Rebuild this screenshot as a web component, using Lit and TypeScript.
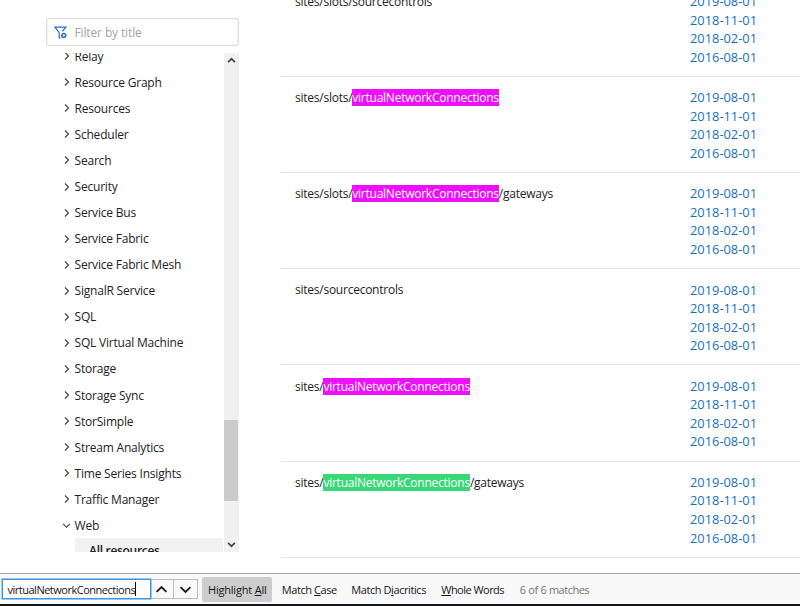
import { LitElement, html, css, svg, nothing } from "lit";
import { customElement } from "lit/decorators.js";

const TERM = "virtualNetworkConnections";
const VERSIONS = ["2019-08-01", "2018-11-01", "2018-02-01", "2016-08-01"];

interface Resource {
  before: string;
  hit?: "match" | "current";
  after?: string;
}

const RESOURCES: Resource[] = [
  { before: "sites/slots/sourcecontrols" },
  { before: "sites/slots/", hit: "match" },
  { before: "sites/slots/", hit: "match", after: "/gateways" },
  { before: "sites/sourcecontrols" },
  { before: "sites/", hit: "match" },
  { before: "sites/", hit: "current", after: "/gateways" },
];

const SERVICES = [
  "Relay", "Resource Graph", "Resources", "Scheduler", "Search", "Security",
  "Service Bus", "Service Fabric", "Service Fabric Mesh", "SignalR Service",
  "SQL", "SQL Virtual Machine", "Storage", "Storage Sync", "StorSimple",
  "Stream Analytics", "Time Series Insights", "Traffic Manager",
];

const chevron = (dir: "right" | "down" | "up", cls: string) => {
  const d = { right: "M3 1.5 6.5 5 3 8.5", down: "M1.2 3.1 5 6.9 8.8 3.1", up: "M1.2 6.9 5 3.1 8.8 6.9" }[dir];
  return html`<svg class=${cls} viewBox="0 0 10 10">${svg`<path d=${d} />`}</svg>`;
};

@customElement("doc-tree")
class DocTree extends LitElement {
  static styles = css`
    :host { display: block; width: 193px; margin: 18px 0 0 46px; flex: none; }
    .filter {
      box-sizing: border-box; height: 28px; border: 1px solid #dedede; border-radius: 2px;
      box-shadow: inset 0 0 0 1px #f3f3f3; letter-spacing: -.13px;
      display: flex; align-items: center; padding-left: 7px; color: #a3a3a3; font-size: 12px;
    }
    .funnel { width: 13px; height: 13px; margin-right: 7.5px; fill: none; stroke: #2b71c4; stroke-width: 1.2; }
    .funnel circle { stroke-width: 1.6; }
    .pane { display: flex; height: 499px; margin-top: 7px; overflow: hidden; }
    .list { flex: 1; margin-top: -9.8px; min-width: 0; }
    .item {
      display: flex; align-items: center; height: 26.07px; padding-left: 16px;
      font-size: 12px; letter-spacing: -.2px; color: #222;
    }
    .mark { width: 10px; height: 10px; margin-right: 2.5px; fill: none; stroke: #444; stroke-width: 1.2; }
    .open .mark { width: 9px; height: 9px; margin: 0 3.5px 0 0; }
    .child {
      margin-left: 29px; margin-right: 1px; padding-left: 14px; height: 26px; line-height: 26px;
      background: #f2f2f2; font-size: 12px; letter-spacing: -.3px; font-weight: 600; color: #222;
    }
    .bar {
      width: 15px; background: #f0f0f0; display: flex; flex-direction: column;
      align-items: flex-start; justify-content: space-between;
    }
    .arrow { width: 9px; height: 9px; margin: 3px 0 3px 2.5px; fill: none; stroke: #484848; stroke-width: 1.9; }
    .track { flex: 1; width: 15px; display: flex; }
    .thumb { width: 14.4px; height: 81px; margin-top: 352px; background: #cbcbcb; }
  `;
  render() {
    return html`
      <div class="filter">
        <svg class="funnel" viewBox="0 0 13 13">
          <path d="M6.4 11.8H5.2V6.6L1 1.2h10.8L8.4 5.4" /><circle cx="9.8" cy="9.4" r="1.9" />
        </svg>
        <span>Filter by title</span>
      </div>
      <div class="pane">
        <div class="list">
          ${SERVICES.map((s) => html`<div class="item">${chevron("right", "mark")}<span>${s}</span></div>`)}
          <div class="item open">${chevron("down", "mark")}<span>Web</span></div>
          <div class="child">All resources</div>
        </div>
        <div class="bar">
          ${chevron("up", "arrow")}
          <div class="track"><div class="thumb"></div></div>
          ${chevron("down", "arrow")}
        </div>
      </div>
    `;
  }
}

@customElement("resource-table")
class ResourceTable extends LitElement {
  static styles = css`
    :host { display: block; flex: 1; margin: -19.4px 0 0 42px; }
    .row {
      box-sizing: border-box; height: 96.2px; padding: 11.4px 0 0 14px; display: flex;
      border-bottom: 1px solid #e3e3e3; line-height: 18.55px; font-size: 12px; color: #222;
    }
    .name { width: 395px; white-space: nowrap; letter-spacing: -.245px; padding-top: .9px; }
    .match, .current { color: #fff; background: #ef0fff; }
    .current { background: #38d878; }
    .dates { display: flex; flex-direction: column; color: #1a6fbd; font-size: 12.85px; }
  `;
  render() {
    return RESOURCES.map((r) => html`
      <div class="row">
        <div class="name">${r.before}${r.hit ? html`<span class=${r.hit}>${TERM}</span>` : nothing}${r.after ?? nothing}</div>
        <div class="dates">${VERSIONS.map((v) => html`<span>${v}</span>`)}</div>
      </div>`);
  }
}

@customElement("find-bar")
class FindBar extends LitElement {
  static styles = css`
    :host {
      box-sizing: border-box; height: 33px; display: flex; align-items: center; background: #f9f9f9;
      border-top: 1px solid #a5a5a5; border-bottom: 2px solid #15151c; padding-left: 2px;
      font-size: 11px; letter-spacing: -.42px; color: #15151a; white-space: nowrap;
    }
    .field {
      box-sizing: border-box; width: 148.5px; height: 20px; border: 1px solid #3a96ea; background: #fff;
      box-shadow: 0 0 0 .5px #3a96ea; display: flex; align-items: center; padding-left: 4.5px;
      letter-spacing: -.49px;
    }
    .caret { width: 1px; height: 14px; background: #000; }
    .step {
      box-sizing: border-box; width: 23.7px; height: 20px; border: 1px solid #bcbcbc; border-left: none;
      display: flex; align-items: center; justify-content: center;
    }
    .icon { width: 13px; height: 13px; fill: none; stroke: #1a1a1a; stroke-width: 1.4; }
    .toggle {
      width: 70px; height: 25px; line-height: 25px; text-align: center; background: #cdcdcd;
      border-radius: 2px; margin-left: 4.4px; letter-spacing: -.2px;
    }
    .case { width: 69.5px; margin-left: 9.5px; }
    .dia { width: 90px; }
    .whole { width: 78.5px; letter-spacing: -.53px; }
    .count { color: #747474; letter-spacing: -.5px; word-spacing: .4px; }
    u { text-underline-offset: 1px; text-decoration-thickness: 1px; }
  `;
  render() {
    return html`
      <div class="field"><span class="term">${TERM}</span><span class="caret"></span></div>
      <div class="step">${chevron("up", "icon")}</div>
      <div class="step">${chevron("down", "icon")}</div>
      <div class="toggle">Highlight <u>A</u>ll</div>
      <div class="case">Match <u>C</u>ase</div>
      <div class="dia">Match D<u>i</u>acritics</div>
      <div class="whole"><u>W</u>hole Words</div>
      <div class="count">6 of 6 matches</div>
    `;
  }
}

@customElement("app-root")
class AppRoot extends LitElement {
  static styles = css`
    :host {
      display: flex; flex-direction: column; width: 800px; height: 606px; overflow: hidden;
      background: #fff; font-family: "Open Sans", "Noto Sans", sans-serif;
    }
    .page { display: flex; height: 573px; overflow: hidden; align-items: flex-start; }
  `;
  render() {
    return html`
      <div class="page"><doc-tree></doc-tree><resource-table></resource-table></div>
      <find-bar></find-bar>
    `;
  }
}
